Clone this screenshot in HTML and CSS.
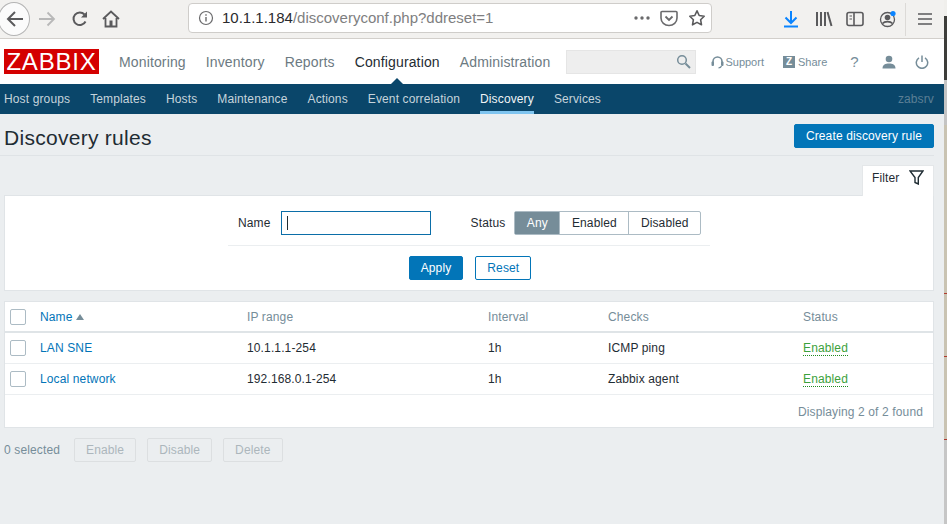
FILE: index.html
```html
<!DOCTYPE html>
<html lang="en">
<head>
  <meta charset="UTF-8" />
  <title>Discovery rules</title>
  <link rel="stylesheet" href="styles.css">
</head>
<body>
  <div class="window">
    <div class="browserbar">
      <div class="backbtn">
        <svg width="20" height="20" viewBox="0 0 20 20"><path d="M18 10H3M10 3l-7 7 7 7" fill="none" stroke="#5a5a5c" stroke-width="2"/></svg>
      </div>
      <svg class="fwd" width="18" height="18" viewBox="0 0 18 18"><path d="M1 9h15M9.500 2.500L16 9l-6.500 6.500" fill="none" stroke="#b8b8b8" stroke-width="1.800"/></svg>
      <svg class="reload" width="18" height="18" viewBox="0 0 18 18"><path d="M14.500 11.500A6.300 6.300 0 1 1 13.500 4.500" fill="none" stroke="#5a5a5c" stroke-width="2"/><path d="M16 1.500V7.500H10z" fill="#5a5a5c"/></svg>
      <svg class="home" width="18" height="18" viewBox="0 0 18 18"><path d="M1 9l8-7.500L17 9M3.500 8v8.500h11V8" fill="none" stroke="#5a5a5c" stroke-width="1.800"/><rect x="7.500" y="10.500" width="3" height="6" fill="#5a5a5c"/></svg>
      <div class="urlbar">
        <svg width="16" height="16" viewBox="0 0 16 16"><circle cx="8" cy="8" r="6.500" fill="none" stroke="#6a6a6c" stroke-width="1.200"/><path d="M8 7v4.500M8 4.200v1.600" stroke="#6a6a6c" stroke-width="1.400"/></svg>
        <span class="url"><span class="host">10.1.1.184</span>/discoveryconf.php?ddreset=1</span>
        <svg class="dots" width="18" height="6" viewBox="0 0 18 6"><circle cx="3" cy="3" r="1.700" fill="#6a6a6c"/><circle cx="9" cy="3" r="1.700" fill="#6a6a6c"/><circle cx="15" cy="3" r="1.700" fill="#6a6a6c"/></svg>
        <svg class="pocket" width="18" height="18" viewBox="0 0 18 18"><path d="M2 2.500h14a1 1 0 0 1 1 1V9a8 7.500 0 0 1-16 0V3.500a1 1 0 0 1 1-1z" fill="none" stroke="#6a6a6c" stroke-width="1.600"/><path d="M5.500 7.500L9 11l3.500-3.500" fill="none" stroke="#6a6a6c" stroke-width="1.800"/></svg>
        <svg class="star" width="18" height="18" viewBox="0 0 18 18"><path d="M9 1.800l2.200 4.700 5 .7-3.600 3.500.9 5.100L9 13.400l-4.500 2.400.9-5.100L1.800 7.200l5-.7z" fill="none" stroke="#5a5a5c" stroke-width="1.600" stroke-linejoin="round"/></svg>
      </div>
      <svg class="dl" width="16" height="18" viewBox="0 0 16 18"><path d="M8 1v11M2.500 7.500L8 13l5.500-5.500" fill="none" stroke="#0a84ff" stroke-width="2"/><path d="M1 16.500h14" stroke="#0a84ff" stroke-width="2"/></svg>
      <svg class="lib" width="18" height="16" viewBox="0 0 18 16"><path d="M2 1v14M6 1v14M10 1v14M12.500 1l4 14" fill="none" stroke="#5a5a5c" stroke-width="2"/></svg>
      <svg class="side" width="18" height="16" viewBox="0 0 18 16"><rect x="1" y="1.500" width="16" height="13" rx="2" fill="none" stroke="#5a5a5c" stroke-width="1.600"/><path d="M8 1.500v13" stroke="#5a5a5c" stroke-width="1.600"/><path d="M3.500 5h2.500M3.500 8h2.500" stroke="#5a5a5c" stroke-width="1.200"/></svg>
      <svg class="acct" width="18" height="18" viewBox="0 0 18 18"><circle cx="8.500" cy="9.500" r="7" fill="none" stroke="#5a5a5c" stroke-width="1.300"/><circle cx="8.500" cy="7.500" r="2.800" fill="#5a5a5c"/><path d="M3.500 13.500c2-2.500 8-2.500 10 0" fill="none" stroke="#5a5a5c" stroke-width="1.600"/><circle cx="14" cy="3.500" r="2.600" fill="#0a84ff"/></svg>
      <div class="toolsep"></div>
      <svg class="menu" width="14" height="14" viewBox="0 0 14 14"><path d="M0 2h14M0 7h14M0 12h14" stroke="#5a5a5c" stroke-width="1.700"/></svg>
    </div>

    <header class="topnav">
      <div class="logo">ZABBIX</div>
      <nav class="mainmenu">
        <a>Monitoring</a>
        <a>Inventory</a>
        <a>Reports</a>
        <a class="active">Configuration</a>
        <a>Administration</a>
      </nav>
      <div class="searchbox">
        <svg width="15" height="15" viewBox="0 0 15 15"><circle cx="6" cy="6" r="4.300" fill="none" stroke="#768d99" stroke-width="1.500"/><path d="M9.500 9.500l4.500 4.500" stroke="#768d99" stroke-width="2"/></svg>
      </div>
      <a class="toplink support">
        <svg width="13" height="14" viewBox="0 0 13 14"><path d="M2 8V6.500a4.500 4.500 0 0 1 9 0V8" fill="none" stroke="#768d99" stroke-width="1.600"/><rect x="0.500" y="6.500" width="2.500" height="4.500" rx="1" fill="#768d99"/><rect x="10" y="6.500" width="2.500" height="4.500" rx="1" fill="#768d99"/><path d="M10.500 11c-.5 1.300-1.500 1.800-3 1.800" fill="none" stroke="#768d99" stroke-width="1.200"/></svg>
        Support
      </a>
      <a class="toplink share"><span class="zbadge">Z</span>Share</a>
      <span class="help">?</span>
      <svg class="usericon" width="14" height="14" viewBox="0 0 14 14"><circle cx="7" cy="4" r="3.300" fill="#768d99"/><path d="M0.500 13.500c0-3.800 3-5 6.500-5s6.500 1.200 6.500 5z" fill="#768d99"/></svg>
      <svg class="power" width="14" height="14" viewBox="0 0 14 14"><path d="M4 2.800a5.700 5.700 0 1 0 6 0" fill="none" stroke="#768d99" stroke-width="1.500"/><path d="M7 0.500v6.500" stroke="#768d99" stroke-width="1.500"/></svg>
    </header>

    <nav class="subnav">
      <a>Host groups</a>
      <a>Templates</a>
      <a>Hosts</a>
      <a>Maintenance</a>
      <a>Actions</a>
      <a>Event correlation</a>
      <a class="active">Discovery</a>
      <a>Services</a>
      <span class="srvname">zabsrv</span>
    </nav>

    <main class="content">
      <div class="titlebar">
        <h1>Discovery rules</h1>
        <button class="btn primary create">Create discovery rule</button>
      </div>

      <div class="filtertabs">
        <div class="filtertab">
          Filter
          <svg width="15" height="15" viewBox="0 0 15 15"><path d="M1 1h13L9.300 7.500V14L6 12.500V7.500z" fill="none" stroke="#1f2c33" stroke-width="1.400"/></svg>
        </div>
      </div>
      <section class="filterbox">
        <div class="filterform">
          <div class="filterrow">
            <label class="namelabel">Name</label>
            <div class="textinput"><span class="caret"></span></div>
            <label class="statuslabel">Status</label>
            <div class="radios">
              <span class="on">Any</span>
              <span>Enabled</span>
              <span>Disabled</span>
            </div>
          </div>
          <div class="filterbtns">
            <button class="btn primary">Apply</button>
            <button class="btn outline">Reset</button>
          </div>
        </div>
      </section>

      <section class="listbox">
        <table>
          <thead>
            <tr>
              <th class="c-check"><span class="check"></span></th>
              <th class="c-name"><a>Name</a><span class="sortup"></span></th>
              <th class="c-ip">IP range</th>
              <th class="c-int">Interval</th>
              <th class="c-chk">Checks</th>
              <th>Status</th>
            </tr>
          </thead>
          <tbody>
            <tr>
              <td class="c-check"><span class="check"></span></td>
              <td><a>LAN SNE</a></td>
              <td>10.1.1.1-254</td>
              <td>1h</td>
              <td>ICMP ping</td>
              <td><span class="enabled">Enabled</span></td>
            </tr>
            <tr>
              <td class="c-check"><span class="check"></span></td>
              <td><a>Local network</a></td>
              <td>192.168.0.1-254</td>
              <td>1h</td>
              <td>Zabbix agent</td>
              <td><span class="enabled">Enabled</span></td>
            </tr>
          </tbody>
        </table>
        <div class="paging">Displaying 2 of 2 found</div>
      </section>

      <div class="actionbar">
        <span class="selected">0 selected</span>
        <button class="btn off">Enable</button>
        <button class="btn off">Disable</button>
        <button class="btn off">Delete</button>
      </div>
    </main>
  </div>
  <div class="edge"></div>
</body>
</html>
```

FILE: styles.css
```css
* {
  box-sizing: border-box;
}

html, body {
  margin: 0;
  height: 524px;
  overflow: hidden;
}

body {
  display: flex;
  font-family: "Liberation Sans", Arial, sans-serif;
  font-size: 12px;
  letter-spacing: 0.13px;
  color: #1f2c33;
  background: #e9ebed;
}

.window {
  width: 944px;
  height: 524px;
  flex: none;
  display: flex;
  flex-direction: column;
  background: #ebeef0;
}

/* sliver of the desktop behind the window */
.edge {
  flex: 1;
  background: linear-gradient(to bottom,
    #f0efec 0 16px, #3e3e3b 16px 80px, #c4c4c4 80px 125px,
    #c9c3b2 125px 293px, #b03a2e 293px 294px, #c9c3b2 294px 356px,
    #b03a2e 356px 357px, #c9c3b2 357px 439px, #b03a2e 439px 440px,
    #c6c6c6 440px 524px);
}

/* browser toolbar */
.browserbar {
  height: 39px;
  flex: none;
  display: flex;
  align-items: center;
  background: #f2f1ef;
  border-bottom: 1px solid #d2cfcb;
}

.browserbar svg {
  flex: none;
}

.backbtn {
  width: 32px;
  height: 34px;
  margin-left: -2px;
  border: 1px solid #b4b4b4;
  border-radius: 50%;
  background: #fbfbfb;
  display: flex;
  align-items: center;
  justify-content: center;
  padding-left: 2px;
}

.fwd { margin-left: 8px; }
.reload { margin-left: 15px; }
.home { margin-left: 13px; }

.urlbar {
  width: 524px;
  height: 30px;
  margin-left: 68px;
  margin-top: -3px;
  background: #fff;
  border: 1px solid #cfcdca;
  border-radius: 4px;
  display: flex;
  align-items: center;
  padding-left: 9px;
}

.url {
  margin-left: 8px;
  font-size: 15px;
  letter-spacing: 0;
  color: #7e7e80;
  white-space: nowrap;
}

.host {
  color: #2a2a2e;
}

.dots { margin-left: auto; }
.pocket { margin-left: 9px; }
.star { margin-left: 10px; margin-right: 5px; }

.dl { margin-left: 71px; }
.lib { margin-left: 16px; }
.side { margin-left: 13px; }
.acct { margin-left: 15px; }
.toolsep { width: 1px; height: 33px; margin-left: 8px; background: #dcdad7; }
.menu { margin-left: 12px; }

/* zabbix header */
.topnav {
  height: 45px;
  background: #fff;
  display: flex;
  align-items: center;
  flex: none;
}

.logo {
  width: 95px;
  height: 25px;
  margin-left: 4px;
  background: #d40000;
  color: #fff;
  font-size: 24px;
  line-height: 25px;
  text-align: center;
  letter-spacing: 0.8px;
}

.mainmenu {
  display: flex;
  gap: 20px;
  margin-left: 20px;
  font-size: 14px;
  letter-spacing: 0.14px;
  color: #6c7a82;
}

.mainmenu .active {
  color: #1f2c33;
  position: relative;
}

.mainmenu .active::after {
  content: "";
  position: absolute;
  left: 50%;
  bottom: -15px;
  margin-left: -7px;
  border: 7px solid transparent;
  border-top: 0;
  border-bottom-color: #0a466a;
}

.searchbox {
  width: 130px;
  height: 24px;
  margin-left: 16px;
  background: #eeeeee;
  border: 1px solid #e5e5e5;
  display: flex;
  align-items: center;
  justify-content: flex-end;
  padding-right: 4px;
}

.toplink {
  display: flex;
  align-items: center;
  font-size: 11px;
  letter-spacing: 0;
  color: #768d99;
}

.support { margin-left: 15px; gap: 1px; }
.share { margin-left: 19px; }

.zbadge {
  width: 12px;
  height: 12px;
  margin-right: 3px;
  background: #768d99;
  color: #fff;
  font-size: 10px;
  font-weight: bold;
  line-height: 12px;
  text-align: center;
}

.help {
  margin-left: 23px;
  font-size: 15px;
  color: #768d99;
}

.usericon { margin-left: 23px; }
.power { margin-left: 19px; }

/* second level menu */
.subnav {
  height: 30px;
  flex: none;
  display: flex;
  padding-left: 4px;
  gap: 20px;
  background: #0a466a;
  color: #c6d4dc;
  line-height: 30px;
}

.subnav .active {
  color: #f0f4f6;
  border-bottom: 3px solid #7fc4ef;
}

.srvname {
  margin-left: auto;
  margin-right: 10px;
  color: #5b7f95;
}

/* page */
.content {
  flex: 1;
  padding: 0 10px 0 4px;
}

.titlebar {
  height: 42px;
  margin-left: -4px;
  padding: 10px 0 0 4px;
  display: flex;
  justify-content: space-between;
  align-items: flex-start;
  border-bottom: 1px solid #dfe3e6;
}

h1 {
  margin: 2px 0 0;
  font-size: 21px;
  font-weight: normal;
  line-height: 24px;
  letter-spacing: 0.28px;
}

.btn {
  height: 24px;
  padding: 0 11px;
  border-radius: 2px;
  font-family: inherit;
  font-size: 12px;
  letter-spacing: inherit;
  border: 1px solid #0275b8;
}

.primary {
  background: #0275b8;
  color: #fff;
}

.outline {
  background: #fff;
  color: #0275b8;
}

.filtertabs {
  margin-top: 9px;
  display: flex;
  justify-content: flex-end;
}

.filtertab {
  width: 72px;
  height: 31px;
  margin-bottom: -1px;
  position: relative;
  background: #fff;
  border: 1px solid #e4e7e9;
  border-bottom: 0;
  display: flex;
  align-items: center;
  justify-content: space-between;
  padding: 0 9px 7px 9px;
}

.filterbox {
  height: 96px;
  background: #fff;
  border: 1px solid #e0e4e7;
  padding-top: 15px;
}

.filterform {
  width: 482px;
  margin-left: 223px;
}

.filterrow {
  height: 35px;
  display: flex;
  align-items: flex-start;
  border-bottom: 1px solid #ebeef0;
}

.namelabel {
  margin-left: 10px;
  line-height: 24px;
}

.textinput {
  width: 150px;
  height: 24px;
  margin-left: 10px;
  border: 1px solid #0b6ea8;
  padding: 4px 0 0 5px;
}

.caret {
  display: block;
  width: 1px;
  height: 14px;
  background: #1f2c33;
}

.statuslabel {
  margin-left: 40px;
  line-height: 24px;
}

.radios {
  display: flex;
  height: 24px;
  margin-left: 9px;
  border: 1px solid #acbbc4;
  border-radius: 2px;
  line-height: 22px;
}

.radios span {
  padding: 0 11.5px;
  border-left: 1px solid #acbbc4;
}

.radios span:first-child {
  border-left: 0;
}

.radios .on {
  background: #768d99;
  color: #fff;
}

.filterbtns {
  display: flex;
  justify-content: center;
  gap: 12px;
  margin-top: 10px;
  padding-left: 2px;
}

.listbox {
  margin-top: 10px;
  height: 127px;
  background: #fff;
  border: 1px solid #e0e4e7;
}

table {
  width: 100%;
  border-collapse: collapse;
  table-layout: fixed;
}

th {
  height: 30px;
  padding: 0;
  font-weight: normal;
  text-align: left;
  color: #768d99;
  border-bottom: 2px solid #dfe4e7;
}

td {
  height: 31px;
  padding: 0;
  border-bottom: 1px solid #ebeef0;
}

a {
  color: #0275b8;
}

.subnav a, .mainmenu a {
  color: inherit;
}

.c-check { width: 35px; padding-left: 5px; }
.c-name { width: 207px; }
.c-ip { width: 241px; }
.c-int { width: 120px; }
.c-chk { width: 195px; }

th, td { line-height: 14px; }

.check {
  display: block;
  width: 16px;
  height: 16px;
  border: 1px solid #acbbc4;
  border-radius: 2px;
  background: #fff;
}

.sortup {
  display: inline-block;
  margin-left: 3px;
  vertical-align: 1px;
  border: 4px solid transparent;
  border-top: 0;
  border-bottom: 6px solid #768d99;
}

.enabled {
  color: #3ca13c;
  border-bottom: 1px dotted #1f8a1f;
}

.paging {
  height: 34px;
  line-height: 34px;
  text-align: right;
  padding-right: 10px;
  color: #768d99;
}

.actionbar {
  margin-top: 10px;
  display: flex;
  align-items: center;
  gap: 11px;
}

.selected {
  color: #768d99;
  margin-right: 3px;
}

.off {
  background: #ebeef0;
  color: #acb6bc;
  border-color: #dcdfe1;
}
```
